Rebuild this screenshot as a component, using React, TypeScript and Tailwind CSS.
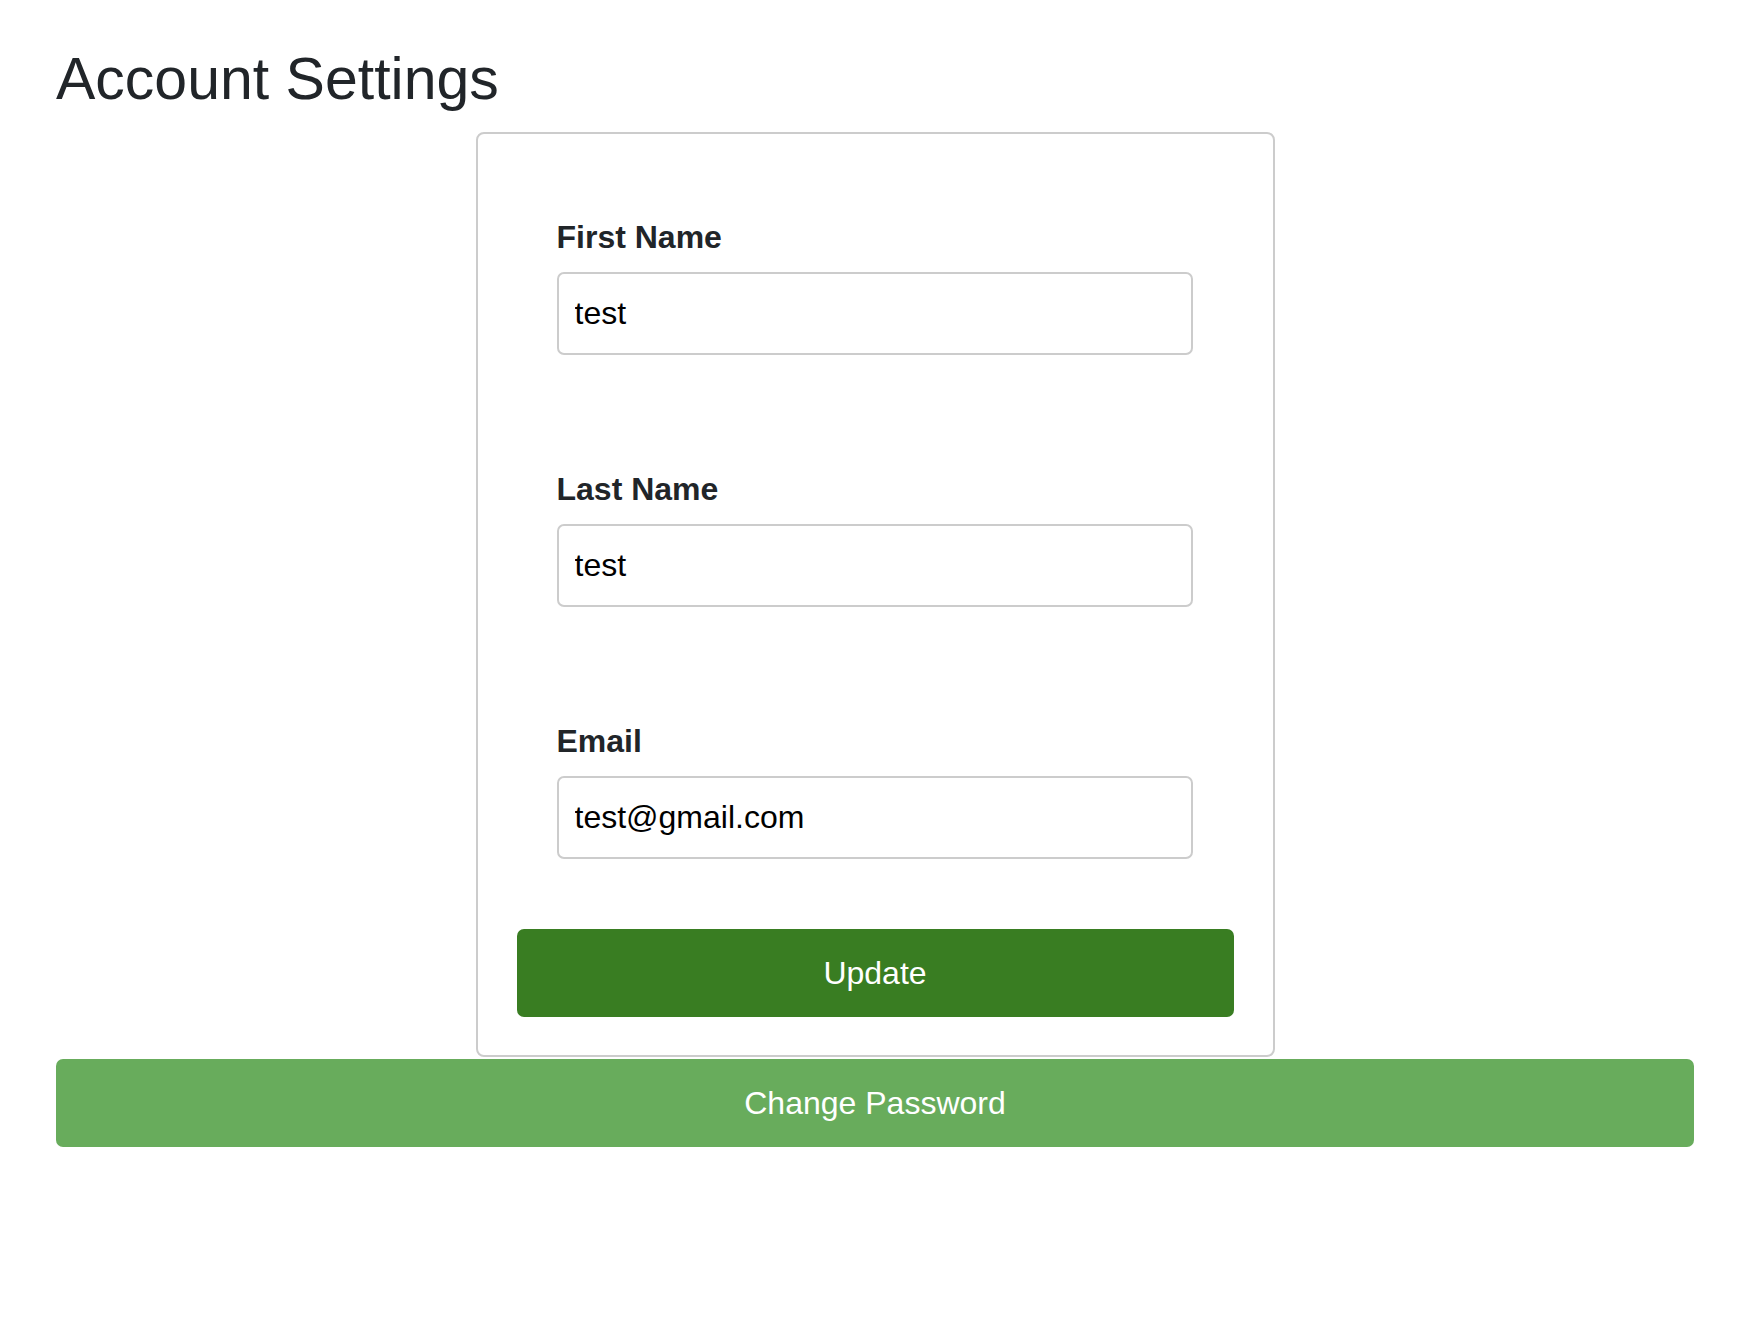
import React from "react";

function Field({ label, value }: { label: string; value: string }) {
  return (
    <div className="px-[40px] pt-[40px] pb-[70px]">
      <label className="block text-[32px] leading-[48px] font-bold text-[#212529] mb-[11px]">{label}</label>
      <input
        readOnly
        value={value}
        className="block w-[636px] h-[83px] border-2 border-[#cccccc] rounded-[7px] px-[16px] text-[32px] text-black bg-white outline-none"
        style={{ fontFamily: '"Liberation Sans", Arial, sans-serif' }}
      />
    </div>
  );
}

export default function App() {
  return (
    <div
      className="min-h-[1342px] bg-white pl-[56px] pr-[66px] pt-[44px]"
      style={{ fontFamily: '"Liberation Sans", Arial, sans-serif' }}
    >
      <h1 className="text-[59px] leading-[71px] font-normal text-[#212529]">Account Settings</h1>
      <div className="flex justify-center mt-[17px]">
        <div className="w-[799px] border-2 border-[#cccccc] rounded-[8px] px-[39px] pt-[39px] pb-[38px]">
          <Field label="First Name" value="test" />
          <Field label="Last Name" value="test" />
          <Field label="Email" value="test@gmail.com" />
          <button className="w-full h-[88px] rounded-[7px] bg-[#397d22] text-white text-[32px]">Update</button>
        </div>
      </div>
      <button className="mt-[2px] w-full h-[88px] rounded-[7px] bg-[#68ac5c] text-white text-[32px]">Change Password</button>
    </div>
  );
}
